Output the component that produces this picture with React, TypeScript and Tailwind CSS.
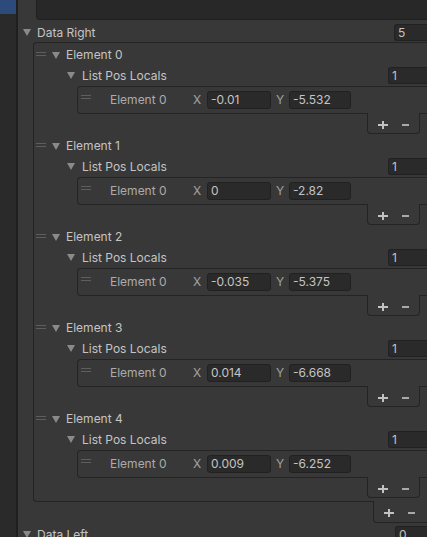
import React from "react"

const rows = [
  { x: "-0.01", y: "-5.532" },
  { x: "0", y: "-2.82" },
  { x: "-0.035", y: "-5.375" },
  { x: "0.014", y: "-6.668" },
  { x: "0.009", y: "-6.252" },
]

function Tri() {
  return (
    <svg width="8" height="7" viewBox="0 0 8 7" className="shrink-0">
      <path d="M0 0h8L4 7z" fill="#8a8a8a" />
    </svg>
  )
}

function Handle({ className = "" }: { className?: string }) {
  return (
    <div className={"flex flex-col gap-[2px] w-[10px] shrink-0 self-start " + className}>
      <div className="h-px bg-[#5e5e5e]" />
      <div className="h-px bg-[#5e5e5e]" />
    </div>
  )
}

function Field({ value, className = "" }: { value: string; className?: string }) {
  return (
    <div
      className={
        "flex items-center pl-[3px] shrink-0 bg-[#2a2a2a] border border-[#212121] text-[#c4c4c4] " + className
      }
    >
      {value}
    </div>
  )
}

// the +/- tab that hangs under a list
function Footer({ className = "" }: { className?: string }) {
  return (
    <div
      className={
        "relative z-10 -mt-px self-end flex items-start pt-[8px] bg-[#383838] border border-t-0 border-[#242424] " +
        className
      }
    >
      <svg width="10" height="8" viewBox="0 0 10 8" className="ml-[10px] shrink-0">
        <rect x="0" y="3" width="10" height="2" fill="#c2c2c2" />
        <rect x="4" y="0" width="2" height="8" fill="#c2c2c2" />
      </svg>
      <svg width="7" height="8" viewBox="0 0 7 8" className="ml-[14px] shrink-0">
        <rect x="0" y="3" width="7" height="2" fill="#a9a9a9" />
      </svg>
    </div>
  )
}

function ElementBlock({ index, x, y }: { index: number; x: string; y: string }) {
  return (
    <div className="flex flex-col">
      <div className="flex items-center h-[16px] pl-[2px]">
        <Handle className="mt-[5px]" />
        <div className="ml-[6px] flex">
          <Tri />
        </div>
        <span className="ml-[6px] text-[#c4c4c4]">Element {index}</span>
      </div>

      <div className="flex items-center h-[17px] mt-[4px] pl-[33px]">
        <Tri />
        <span className="ml-[7px] text-[#c4c4c4]">List Pos Locals</span>
        <Field value="1" className="ml-auto w-[39px] h-[17px] border-r-0 rounded-l-[3px]" />
      </div>

      <div className="flex flex-col ml-[43px] mt-[2px]">
        <div className="flex items-center h-[28px] border border-r-0 border-[#242424] rounded-l-[4px]">
          <Handle className="ml-[3px] mt-[8px]" />
          <span className="ml-[19px] w-[83px] text-[#ababab]">Element 0</span>
          <span className="w-[14px] text-[#a2a2a2]">X</span>
          <Field value={x} className="w-[64px] h-[18px] rounded-[3px]" />
          <span className="ml-[5px] w-[13px] text-[#a2a2a2]">Y</span>
          <Field value={y} className="w-[62px] h-[18px] rounded-[3px]" />
        </div>
        <Footer className="h-[21px] w-[53px] mr-[7px] rounded-b-[4px]" />
      </div>
    </div>
  )
}

export default function App() {
  return (
    <div className="flex w-[427px] h-[537px] overflow-hidden bg-[#383838] font-['Inter',_'Liberation_Sans',_sans-serif] text-[12px] leading-none">
      <div className="w-[18px] shrink-0 bg-[#2a2a2a] border-r-2 border-[#1f1f1f]">
        <div className="h-[14px] bg-[#2c4a7a]" />
      </div>

      <div className="flex-1 min-w-0 flex flex-col">
        <div className="h-[20px] ml-[18px] shrink-0 bg-[#282828] border-l border-b border-[#202020] rounded-bl-[4px]" />

        <div className="flex items-center h-[17px] mt-[4px] pl-[5px] shrink-0">
          <Tri />
          <span className="ml-[6px] text-[#c4c4c4]">Data Right</span>
          <Field value="5" className="ml-auto w-[33px] h-[17px] border-r-0 rounded-l-[3px]" />
        </div>

        <div className="flex flex-col ml-[15px] mt-[1px] shrink-0">
          <div className="flex flex-col gap-[4px] pt-[4px] pb-[3px] border border-r-0 border-[#242424] rounded-l-[4px]">
            {rows.map((r, i) => (
              <ElementBlock key={i} index={i} x={r.x} y={r.y} />
            ))}
          </div>
          <Footer className="h-[22px] w-[54px] border-r-0 rounded-bl-[4px]" />
        </div>

        <div className="flex items-center h-[17px] mt-[3px] pl-[5px] shrink-0">
          <Tri />
          <span className="ml-[6px] text-[#c4c4c4]">Data Left</span>
          <Field value="0" className="ml-auto w-[32px] h-[17px] border-r-0 rounded-l-[3px]" />
        </div>
      </div>
    </div>
  )
}
